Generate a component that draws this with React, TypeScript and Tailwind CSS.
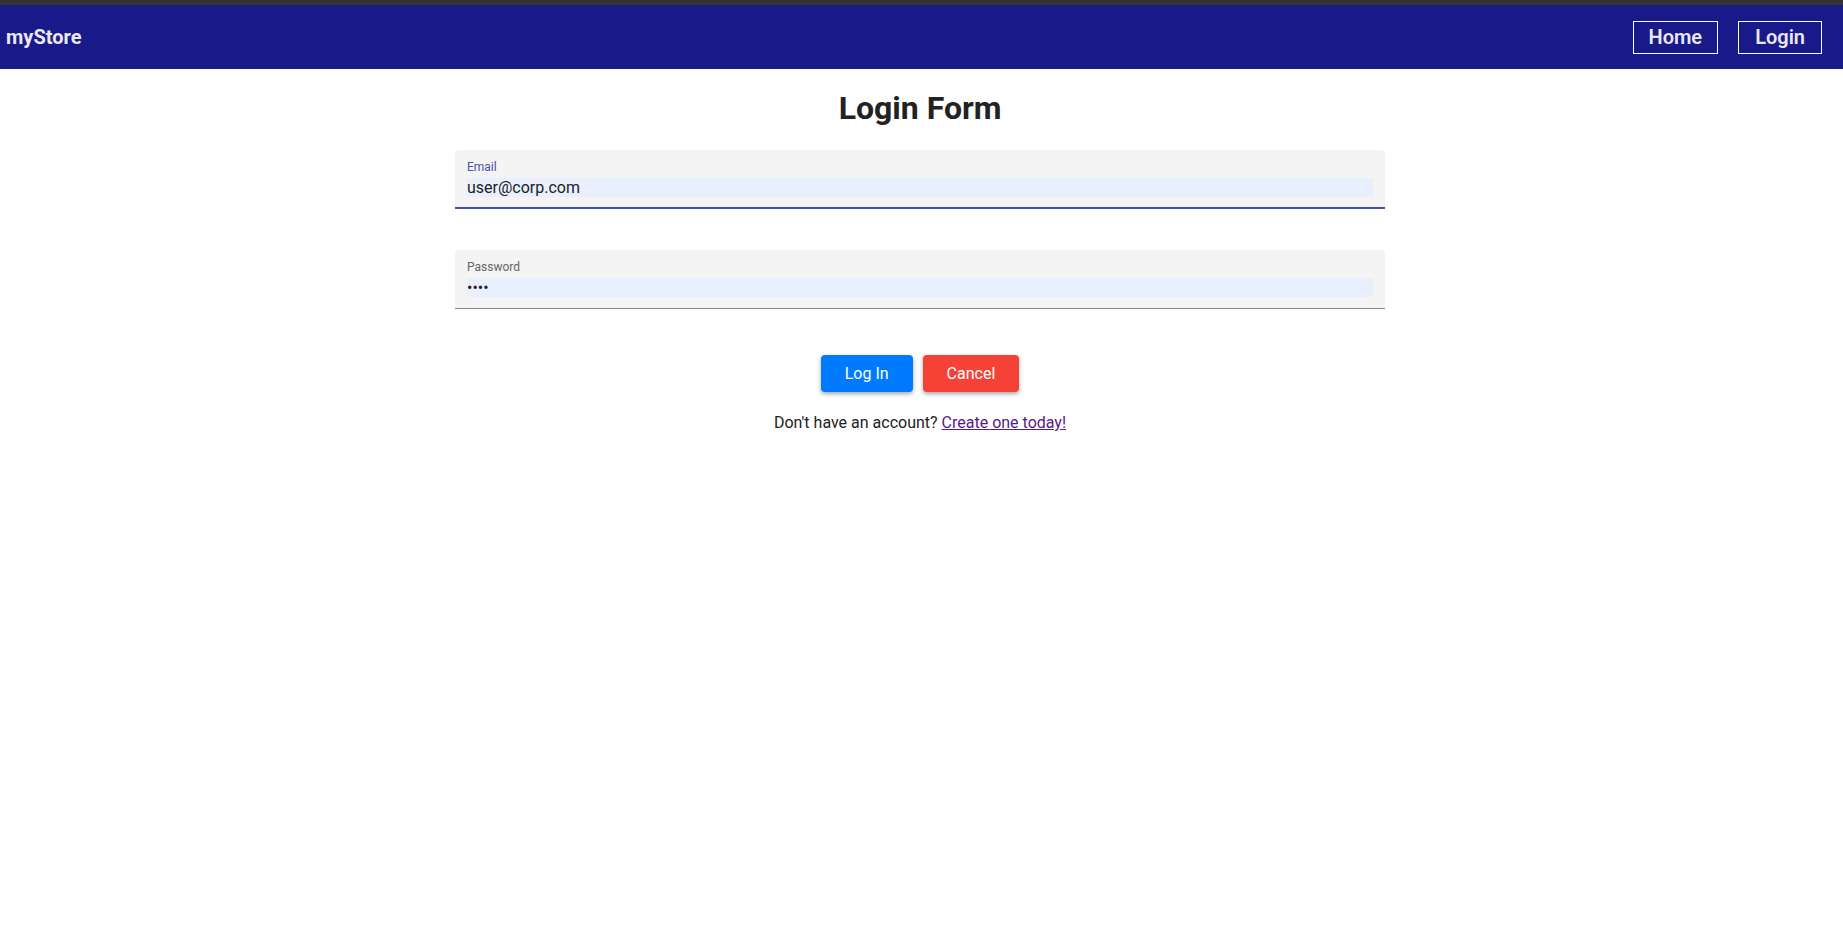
import React from "react";

function Field({ label, value, type, focused }: { label: string; value: string; type: string; focused?: boolean }) {
  return (
    <div
      className={`rounded-t-[4px] bg-[#f4f4f4] px-[12px] pt-[10px] ${
        focused ? "border-b-2 border-[#3f51b5] pb-[10px]" : "border-b border-[#8d8d8d] pb-[11px]"
      }`}
    >
      <label className={`block text-[12px] leading-[14px] ${focused ? "text-[#4a4fb0]" : "text-[#666666]"}`}>
        {label}
      </label>
      <input
        type={type}
        defaultValue={value}
        className="mt-[4px] block h-[19px] w-full bg-[#e8f0fe] text-[16px] leading-[19px] text-[#222222] outline-none"
      />
    </div>
  );
}

export default function App() {
  return (
    <div className="min-h-screen bg-white" style={{ fontFamily: "Roboto, 'Liberation Sans', sans-serif" }}>
      <div className="h-[5px] bg-[#333333]" />
      <nav className="flex h-[64px] items-center justify-between bg-[#1a198a] pl-[6px] pr-[21px]">
        <span className="text-[20px] font-bold text-[#e8e8f0]">myStore</span>
        <div className="flex gap-[20px]">
          <a href="/home" className="flex h-[33px] items-center border border-white px-[15px] text-[20px] font-semibold text-[#e8e8f0]">
            Home
          </a>
          <a href="/login" className="flex h-[33px] items-center border border-white px-[16px] text-[20px] font-semibold text-[#e8e8f0]">
            Login
          </a>
        </div>
      </nav>

      <div className="flex justify-center pr-[3px]">
        <main className="w-[930px]">
          <h1 className="mt-[21px] text-center text-[32px] font-bold leading-[37px] text-[#222222]">Login Form</h1>
          <div className="mt-[23px]">
            <Field label="Email" value="user@corp.com" type="email" focused />
          </div>
          <div className="mt-[41px]">
            <Field label="Password" value="abcd" type="password" />
          </div>
          <div className="mt-[46px] flex justify-center gap-[10px]">
            <button className="h-[37px] rounded-[4px] bg-[#007bff] px-[24px] text-[16px] text-white shadow-[0_2px_4px_rgba(0,0,0,0.35)]">
              Log In
            </button>
            <button className="h-[37px] rounded-[4px] bg-[#f44336] px-[24px] text-[16px] text-white shadow-[0_2px_4px_rgba(0,0,0,0.35)]">
              Cancel
            </button>
          </div>
          <p className="mt-[21px] text-center text-[16px] leading-[19px] text-[#222222]">
            Don't have an account?{" "}
            <a href="/register" className="text-[#551a8b] underline">
              Create one today!
            </a>
          </p>
        </main>
      </div>
    </div>
  );
}
